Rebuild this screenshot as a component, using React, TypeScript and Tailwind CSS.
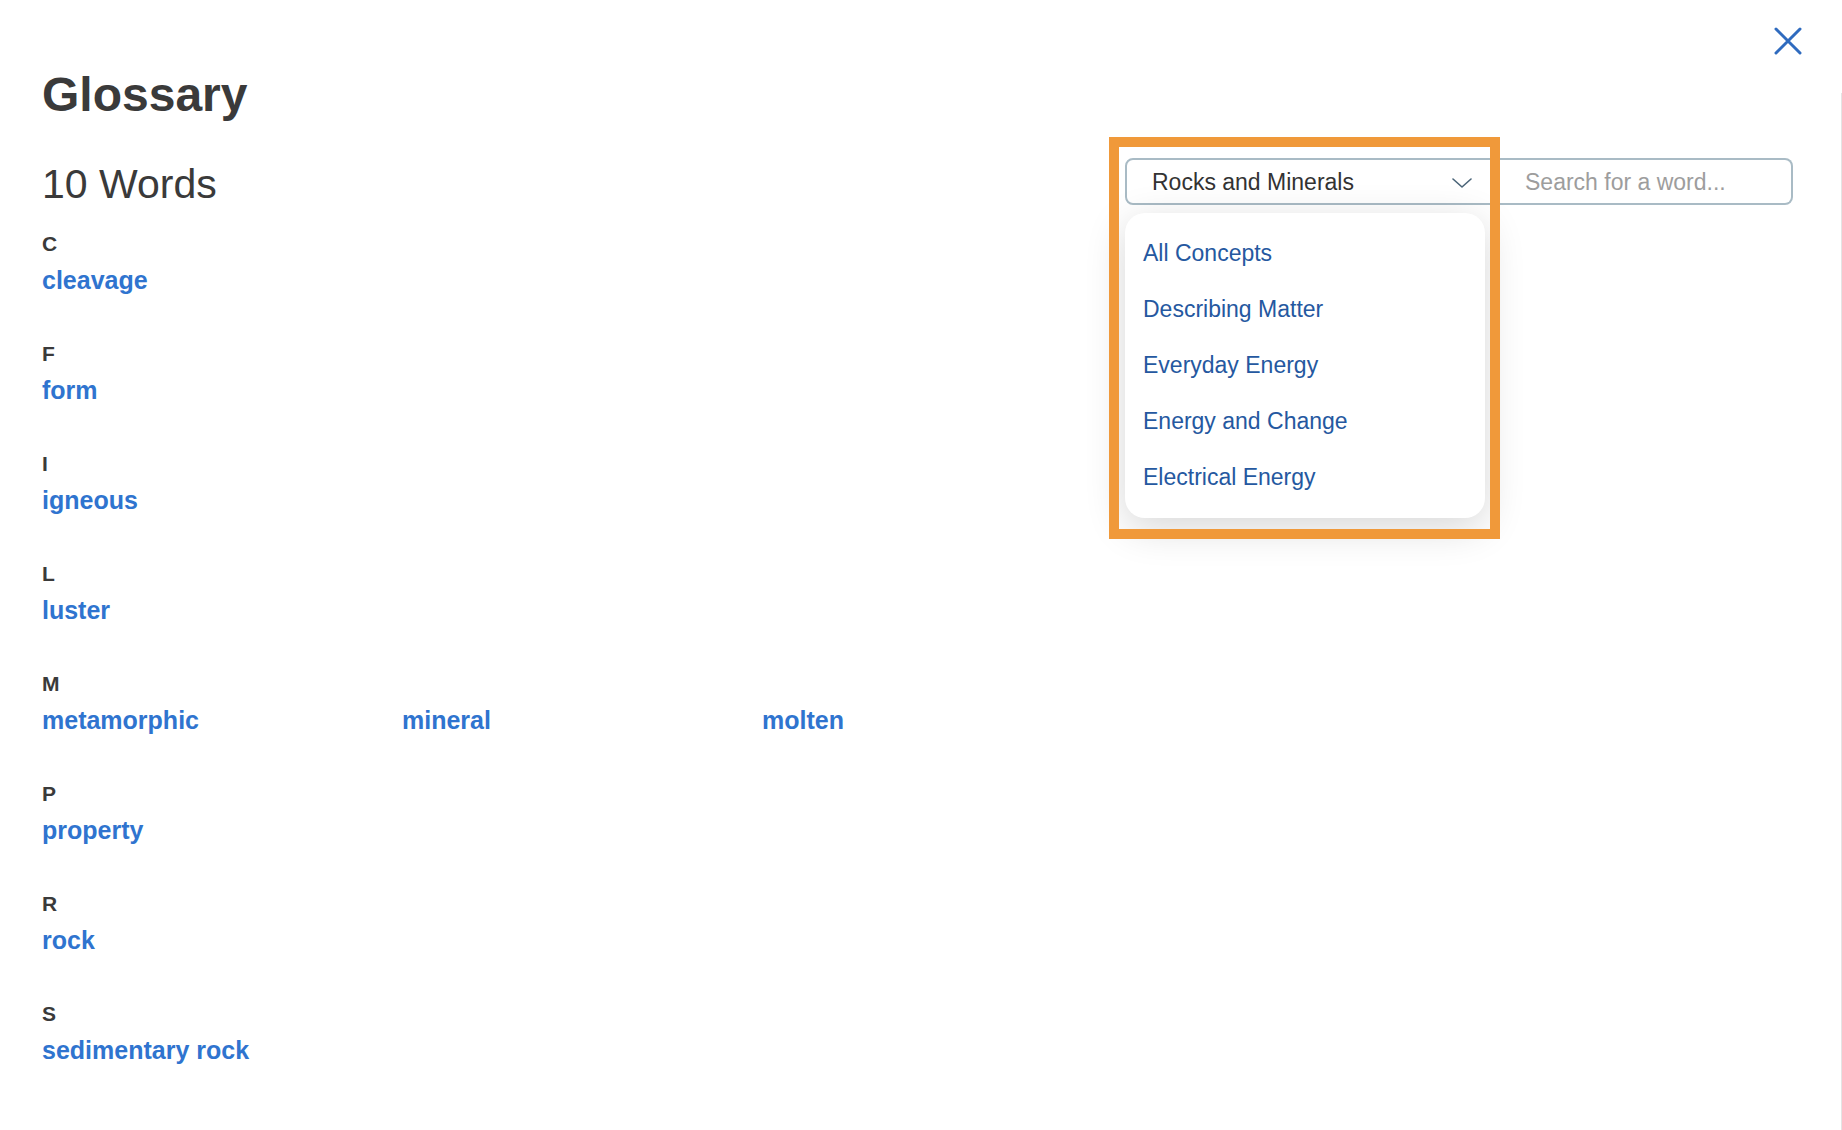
import React, { useState } from 'react';

const sections: { letter: string; words: string[] }[] = [
  { letter: 'C', words: ['cleavage'] },
  { letter: 'F', words: ['form'] },
  { letter: 'I', words: ['igneous'] },
  { letter: 'L', words: ['luster'] },
  { letter: 'M', words: ['metamorphic', 'mineral', 'molten'] },
  { letter: 'P', words: ['property'] },
  { letter: 'R', words: ['rock'] },
  { letter: 'S', words: ['sedimentary rock'] },
];

const concepts = ['All Concepts', 'Describing Matter', 'Everyday Energy', 'Energy and Change', 'Electrical Energy'];

const ConceptFilter: React.FC = () => {
  const [query, setQuery] = useState('');

  return (
    <div className="relative flex w-[668px] h-[47px]">
      <button className="flex w-[372px] shrink-0 items-center justify-between rounded-l-[8px] border-2 border-[#a9bbc5] bg-white pl-[25px] pr-[23px] pt-[2px] text-left">
        <span className="text-[23px] leading-none text-[#333333]">Rocks and Minerals</span>
        <svg width="20" height="10" viewBox="0 0 20 10" fill="none">
          <path d="M1 1l9 8 9-8" stroke="#4a6478" strokeWidth="1.6" strokeLinecap="round" strokeLinejoin="round" />
        </svg>
      </button>
      <input
        value={query}
        onChange={e => setQuery(e.target.value)}
        placeholder="Search for a word..."
        className="min-w-0 flex-1 rounded-r-[8px] border-2 border-l-0 border-[#a9bbc5] bg-white pl-[28px] pt-[2px] text-[23px] text-[#333333] outline-none placeholder:text-[#9d9d9d]"
      />

      {/* open dropdown */}
      <div className="absolute left-0 top-[55px] w-[360px] rounded-[20px] bg-white pt-[12px] pb-[13px] shadow-[0_10px_40px_rgba(0,0,0,0.16)]">
        {concepts.map(c => (
          <div key={c} className="flex h-[56px] items-center pl-[18px] text-[23px] text-[#2558a0]">
            {c}
          </div>
        ))}
      </div>

      {/* highlight frame */}
      <div className="pointer-events-none absolute left-[-16px] top-[-21px] h-[402px] w-[391px] border-[10px] border-[#f0993a]" />
    </div>
  );
};

const App: React.FC = () => {
  return (
    <div className="relative min-h-screen w-full bg-white font-['Liberation_Sans',Arial,sans-serif] text-[#3a3a3a]">
      <button className="absolute right-[40px] top-[27px]" aria-label="Close">
        <svg width="28" height="28" viewBox="0 0 28 28" fill="none">
          <path d="M2 2l24 24M26 2L2 26" stroke="#2f6bbf" strokeWidth="3" strokeLinecap="round" />
        </svg>
      </button>
      <div className="absolute bottom-0 right-0 top-[93px] w-px bg-[#e4e4e4]" />

      <div className="pl-[42px] pr-[49px] pt-[71px] pb-[60px]">
        <h1 className="text-[48px] font-bold leading-none">Glossary</h1>

        <div className="mt-[39px] flex items-start justify-between">
          <div className="mt-[6px] text-[41px] leading-none">10 Words</div>
          <ConceptFilter />
        </div>

        <div className="mt-[28px] flex flex-col gap-[50px]">
          {sections.map(s => (
            <div key={s.letter}>
              <div className="text-[21px] font-bold leading-none">{s.letter}</div>
              <div className="mt-[14px] flex">
                {s.words.map(w => (
                  <a key={w} href="#" className="w-[360px] text-[25px] font-bold leading-none text-[#2f74cf]">
                    {w}
                  </a>
                ))}
              </div>
            </div>
          ))}
        </div>
      </div>
    </div>
  );
};

export default App;
